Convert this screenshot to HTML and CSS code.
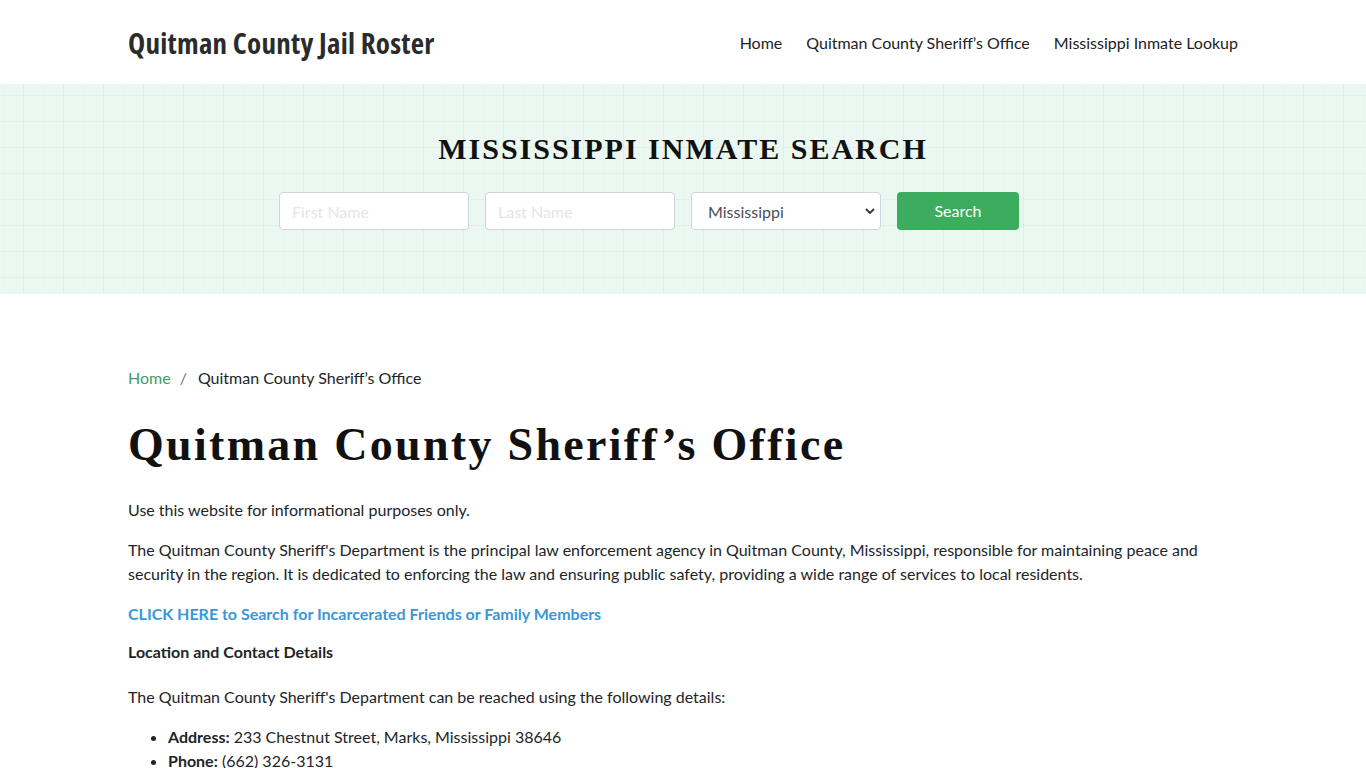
FILE: index.html
```html
<!DOCTYPE html>
<html lang="en">
<head>
<meta charset="utf-8">
<title>Quitman County Sheriff’s Office</title>
<link rel="stylesheet" href="styles.css">
</head>
<body>
<header class="site-header">
  <div class="container header-inner">
    <a class="logo" href="#">Quitman County Jail Roster</a>
    <nav class="main-nav">
      <a href="#">Home</a>
      <a href="#">Quitman County Sheriff’s Office</a>
      <a href="#">Mississippi Inmate Lookup</a>
    </nav>
  </div>
</header>
<section class="hero">
  <h2 class="hero-title">MISSISSIPPI INMATE SEARCH</h2>
  <form class="search-form">
    <input class="field" type="text" placeholder="First Name">
    <input class="field" type="text" placeholder="Last Name">
    <div class="select-wrap">
      <select class="field select">
        <option>Mississippi</option>
      </select>
      <svg class="chev" viewBox="0 0 10 6" width="10" height="6"><path d="M1 1l4 4 4-4" fill="none" stroke="#333" stroke-width="1.8"/></svg>
    </div>
    <div class="btn-cell"><button type="button" class="btn">Search</button></div>
  </form>
</section>
<main class="container content">
  <nav class="breadcrumb">
    <a href="#">Home</a><span class="sep">/</span><span class="current">Quitman County Sheriff’s Office</span>
  </nav>
  <h1 class="page-title">Quitman County Sheriff’s Office</h1>
  <p>Use this website for informational purposes only.</p>
  <p>The Quitman County Sheriff's Department is the principal law enforcement agency in Quitman County, Mississippi, responsible for maintaining peace and security in the region. It is dedicated to enforcing the law and ensuring public safety, providing a wide range of services to local residents.</p>
  <p class="cta"><a href="#">CLICK HERE to Search for Incarcerated Friends or Family Members</a></p>
  <p class="subhead"><strong>Location and Contact Details</strong></p>
  <p>The Quitman County Sheriff's Department can be reached using the following details:</p>
  <ul class="details">
    <li><strong>Address:</strong> 233 Chestnut Street, Marks, Mississippi 38646</li>
    <li><strong>Phone:</strong> (662) 326-3131</li>
  </ul>
</main>
</body>
</html>
```
FILE: styles.css
```css
* { box-sizing: border-box; }
html, body { margin: 0; padding: 0; }
body {
  font-family: Lato, "Open Sans", sans-serif;
  font-size: 16px;
  line-height: 24px;
  color: #212529;
  background: #fff;
}
a { text-decoration: none; }
.container {
  width: 1110px;
  margin: 0 auto;
}
.site-header {
  height: 84px;
  background: #fff;
}
.header-inner {
  height: 84px;
  display: flex;
  align-items: center;
  justify-content: space-between;
}
.logo {
  font-family: "Open Sans", "DejaVu Sans", sans-serif;
  font-stretch: 75%;
  font-weight: 700;
  font-size: 29px;
  line-height: 36px;
  letter-spacing: 0.25px;
  color: #2b2b2b;
  position: relative;
  top: 1px;
}
.main-nav {
  display: flex;
  gap: 24px;
  position: relative;
  top: 1px;
}
.main-nav a {
  font-size: 16px;
  color: #222;
}
.hero {
  height: 210px;
  background-color: #ebf8f1;
  background-image:
    linear-gradient(90deg, rgba(205,228,214,0.32) 1px, transparent 1px),
    linear-gradient(90deg, rgba(205,228,214,0.16) 1px, transparent 1px),
    linear-gradient(0deg, rgba(205,228,214,0.3) 1px, transparent 1px);
  background-size: 40px 100%, 20px 100%, 100% 26px;
  background-position: 23px 0, 3px 0, 0 12px;
  padding-top: 47px;
}
.hero-title {
  margin: 0;
  text-align: center;
  font-family: "Liberation Serif", "Times New Roman", serif;
  font-weight: 700;
  font-size: 30px;
  line-height: 36px;
  letter-spacing: 2px;
  color: #111;
}
.search-form {
  width: 808px;
  margin: 25px auto 0;
  display: grid;
  grid-template-columns: repeat(4, 190px);
  gap: 16px;
}
.field {
  width: 190px;
  height: 38px;
  border: 1px solid #ced4da;
  border-radius: 4px;
  background: #fff;
  padding: 0 12px;
  font-family: Lato, sans-serif;
  font-size: 16px;
  color: #495057;
}
.field::placeholder { color: #e4e6e8; }
.select-wrap { position: relative; }
.select {
  appearance: none;
  -webkit-appearance: none;
  padding-left: 16px;
}
.chev {
  position: absolute;
  right: 6px;
  top: 16px;
  pointer-events: none;
}
.btn {
  width: 122px;
  height: 38px;
  border: 0;
  border-radius: 4px;
  background: #3cad5e;
  color: #fff;
  font-family: Lato, sans-serif;
  font-size: 16px;
  padding-bottom: 2px;
}
.content {
  padding-top: 72px;
}
.breadcrumb {
  font-size: 16px;
  line-height: 24px;
  color: #212529;
}
.breadcrumb a { color: #3f9d5f; }
.breadcrumb .sep { color: #6c757d; padding: 0 11px 0 9px; }
.page-title {
  margin: 29px 0 0;
  font-family: "Liberation Serif", "Times New Roman", serif;
  font-weight: 700;
  font-size: 46px;
  line-height: 52px;
  letter-spacing: 2.3px;
  color: #111;
}
p { margin: 0 0 16px; }
.page-title + p { margin-top: 27px; }
.cta { margin-bottom: 14px; }
.cta a { color: #3a97d8; font-weight: 700; }
.subhead { margin-bottom: 21px; }
.details {
  margin: 16px 0 0;
  padding-left: 40px;
}
```
